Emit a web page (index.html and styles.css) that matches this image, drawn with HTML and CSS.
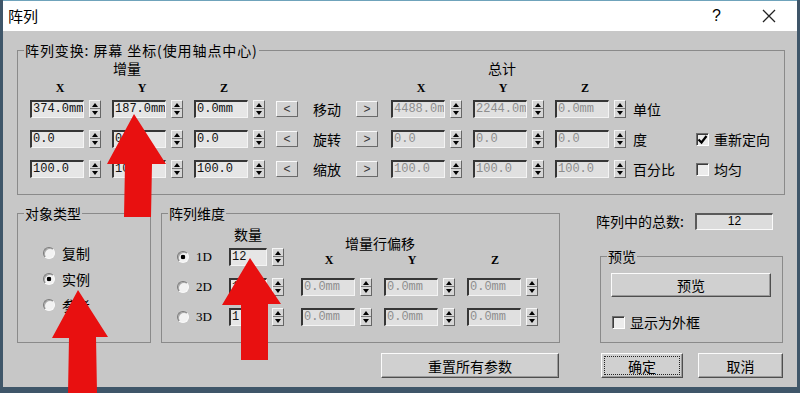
FILE: index.html
```html
<!DOCTYPE html>
<html lang="zh-CN">
<head>
  <meta charset="UTF-8">
  <title>阵列</title>
  <link rel="stylesheet" href="styles.css">
</head>
<body>
  <div class="dialog">
    <div class="titlebar">
      <span class="title">阵列</span>
      <span class="help">?</span>
      <svg class="close" width="14" height="14" viewBox="0 0 14 14"><path d="M1 1L13 13M13 1L1 13" stroke="#222" stroke-width="1.3"/></svg>
    </div>

    <div class="content">
      <fieldset class="group transform">
        <legend>阵列变换: 屏幕 坐标(使用轴点中心)</legend>
        <div class="transform-body">
          <div class="trow heads">
            <span class="head col-b">增量</span>
            <span class="head head-total col-ty">总计</span>
          </div>
          <div class="trow axes">
            <span class="axis col-a">X</span>
            <span class="axis col-b">Y</span>
            <span class="axis col-c">Z</span>
            <span class="axis col-tx">X</span>
            <span class="axis col-ty">Y</span>
            <span class="axis col-tz">Z</span>
          </div>
          <div class="trow">
            <div class="spin"><span class="field">374.0mm</span><span class="updown"></span></div>
            <div class="spin"><span class="field">187.0mm</span><span class="updown"></span></div>
            <div class="spin"><span class="field">0.0mm</span><span class="updown"></span></div>
            <button class="step">&lt;</button>
            <span class="label">移动</span>
            <button class="step">&gt;</button>
            <div class="spin off"><span class="field">4488.0mm</span><span class="updown"></span></div>
            <div class="spin off"><span class="field">2244.0mm</span><span class="updown"></span></div>
            <div class="spin off"><span class="field">0.0mm</span><span class="updown"></span></div>
            <span class="label unit">单位</span>
          </div>
          <div class="trow">
            <div class="spin"><span class="field">0.0</span><span class="updown"></span></div>
            <div class="spin"><span class="field">0.0</span><span class="updown"></span></div>
            <div class="spin"><span class="field">0.0</span><span class="updown"></span></div>
            <button class="step">&lt;</button>
            <span class="label">旋转</span>
            <button class="step">&gt;</button>
            <div class="spin off"><span class="field">0.0</span><span class="updown"></span></div>
            <div class="spin off"><span class="field">0.0</span><span class="updown"></span></div>
            <div class="spin off"><span class="field">0.0</span><span class="updown"></span></div>
            <span class="label unit">度</span>
            <label class="check"><span class="box on"><svg width="11" height="11" viewBox="0 0 11 11"><path d="M1.5 5.5L4.5 8.5L9.5 2" stroke="#000" stroke-width="2.2" fill="none"/></svg></span>重新定向</label>
          </div>
          <div class="trow">
            <div class="spin"><span class="field">100.0</span><span class="updown"></span></div>
            <div class="spin"><span class="field">100.0</span><span class="updown"></span></div>
            <div class="spin"><span class="field">100.0</span><span class="updown"></span></div>
            <button class="step">&lt;</button>
            <span class="label">缩放</span>
            <button class="step">&gt;</button>
            <div class="spin off"><span class="field">100.0</span><span class="updown"></span></div>
            <div class="spin off"><span class="field">100.0</span><span class="updown"></span></div>
            <div class="spin off"><span class="field">100.0</span><span class="updown"></span></div>
            <span class="label unit">百分比</span>
            <label class="check"><span class="box"></span>均匀</label>
          </div>
        </div>
      </fieldset>

      <div class="lower">
        <div class="lower-left">
          <fieldset class="group objtype">
            <legend>对象类型</legend>
            <div class="radios">
              <div class="opt"><span class="radio"></span>复制</div>
              <div class="opt"><span class="radio on"></span>实例</div>
              <div class="opt"><span class="radio"></span>参考</div>
            </div>
          </fieldset>

          <fieldset class="group dims">
            <legend>阵列维度</legend>
            <div class="dims-grid">
              <span></span>
              <span class="count-head">数量</span>
              <div class="offset-head">
                <div class="offset-title">增量行偏移</div>
                <div class="offset-axes">
                  <span class="axis small">X</span>
                  <span class="axis small">Y</span>
                  <span class="axis small">Z</span>
                </div>
              </div>

              <div class="opt"><span class="radio on"></span><span class="dim">1D</span></div>
              <div class="spin"><span class="field short">12</span><span class="updown"></span></div>

              <div class="opt"><span class="radio"></span><span class="dim">2D</span></div>
              <div class="spin"><span class="field short">1</span><span class="updown"></span></div>
              <div class="spin off"><span class="field">0.0mm</span><span class="updown"></span></div>
              <div class="spin off"><span class="field">0.0mm</span><span class="updown"></span></div>
              <div class="spin off"><span class="field">0.0mm</span><span class="updown"></span></div>

              <div class="opt"><span class="radio"></span><span class="dim">3D</span></div>
              <div class="spin"><span class="field short">1</span><span class="updown"></span></div>
              <div class="spin off"><span class="field">0.0mm</span><span class="updown"></span></div>
              <div class="spin off"><span class="field">0.0mm</span><span class="updown"></span></div>
              <div class="spin off"><span class="field">0.0mm</span><span class="updown"></span></div>
            </div>
          </fieldset>
        </div>

        <div class="lower-right">
          <div class="total-row">
            <span>阵列中的总数:</span>
            <span class="total">12</span>
          </div>
          <fieldset class="group preview">
            <legend>预览</legend>
            <button class="btn preview-btn">预览</button>
            <label class="check"><span class="box"></span>显示为外框</label>
          </fieldset>
        </div>

        <button class="btn reset">重置所有参数</button>

        <div class="actions">
          <button class="btn ok">确定</button>
          <button class="btn cancel">取消</button>
        </div>
      </div>
    </div>
  </div>

  <!-- flèches rouges d'annotation -->
  <svg class="marks" width="800" height="393" viewBox="0 0 800 393">
    <polygon points="134,114 166,164 152,164 151,217 124,217 125,164 107,164" fill="#e81010"/>
    <polygon points="78,290 108,337 96,337 97,393 68,393 69,338 52,338" fill="#e81010"/>
    <polygon points="250,258 281,304 268,304 268,360 241,360 241,305 222,305" fill="#e81010"/>
  </svg>
</body>
</html>
```

FILE: styles.css
```css
* {
  box-sizing: border-box;
}

body {
  margin: 0;
  width: 800px;
  height: 393px;
  overflow: hidden;
  position: relative;
  background: #3f5669;
  font-family: "Noto Sans CJK SC", "Noto Sans", sans-serif;
  font-size: 14px;
  line-height: 18px;
  color: #000;
}

.dialog {
  margin-left: 3px;
  width: 794px;
  height: 387px;
  background: #c7c7c7;
}

.titlebar {
  height: 31px;
  background: #fff;
  border-top: 1px solid #6fa3bb;
  display: flex;
  align-items: center;
  padding-left: 5px;
}

.title {
  flex: 1;
  font-size: 15px;
}

.help {
  font-family: "Liberation Sans", sans-serif;
  font-size: 16px;
  margin-right: 41px;
}

.close {
  margin-right: 21px;
}

.content {
  padding: 10px 0 0 14px;
}

fieldset {
  margin: 0;
  padding: 0;
  min-width: 0;
  border: 1px solid #8a8a8a;
}

legend {
  margin-left: 6px;
  padding: 0 1px;
  font-size: 14px;
  line-height: 18px;
}

/* bloc du haut */
.transform {
  width: 768px;
}

.transform legend {
  letter-spacing: 0.9px;
}

.transform-body {
  padding: 0 0 10px 12px;
}

.trow {
  display: grid;
  grid-template-columns: 71px 71px 71px 22px 36px 24px 71px 71px 71px 48px auto;
  column-gap: 11px;
  align-items: center;
  height: 30px;
}

.trow.heads {
  height: 18px;
}

.trow.axes {
  height: 17px;
  align-items: start;
}

.col-a { grid-column: 1; }
.col-b { grid-column: 2; }
.col-c { grid-column: 3; }
.col-tx { grid-column: 7; }
.col-ty { grid-column: 8; }
.col-tz { grid-column: 9; }

.head {
  margin-left: 1px;
  line-height: 16px;
}

.head-total {
  margin-left: 15px;
}

.axis {
  width: 60px;
  text-align: center;
  font-family: "Liberation Serif", serif;
  font-weight: bold;
  font-size: 12px;
  line-height: 16px;
  margin-top: 3px;
}

.axis.small {
  width: 56px;
  margin-top: 0;
}

.label {
  text-align: center;
}

.unit {
  text-align: left;
  margin-left: -4px;
}

/* champs + flèches */
.spin {
  display: flex;
  align-items: center;
  gap: 5px;
}

.field {
  display: block;
  width: 54px;
  height: 18px;
  padding-left: 1px;
  background: #e6e6e6;
  border-top: 2px solid #363636;
  border-left: 2px solid #363636;
  border-right: 1px solid #f4f4f4;
  border-bottom: 1px solid #f4f4f4;
  font-family: "Liberation Mono", monospace;
  font-size: 12px;
  line-height: 15px;
  white-space: nowrap;
  overflow: hidden;
  color: #111;
}

.field.short {
  width: 38px;
}

.spin.off .field {
  color: #8e8e8e;
  background: #e0e0e0;
}

.updown {
  display: block;
  position: relative;
  width: 12px;
  height: 18px;
  border: 1px solid;
  border-color: #f6f6f6 #666 #666 #f6f6f6;
  background: linear-gradient(#d6d6d6 0 7px, #7a7a7a 7px 8px, #d6d6d6 8px);
}

.updown::before,
.updown::after {
  content: "";
  position: absolute;
  left: 2px;
  border-left: 3px solid transparent;
  border-right: 3px solid transparent;
}

.updown::before {
  top: 2px;
  border-bottom: 4px solid #000;
}

.updown::after {
  bottom: 2px;
  border-top: 4px solid #000;
}

.step {
  width: 22px;
  height: 16px;
  padding: 0;
  background: #d2d2d2;
  border: 1px solid;
  border-color: #fafafa #6a6a6a #6a6a6a #fafafa;
  font-family: "Liberation Sans", sans-serif;
  font-size: 12px;
  line-height: 13px;
  color: #333;
}

/* cases à cocher et boutons radio */
.check {
  display: flex;
  align-items: center;
  gap: 5px;
}

.box {
  display: flex;
  align-items: center;
  justify-content: center;
  width: 13px;
  height: 13px;
  background: #ececec;
  border: 1px solid;
  border-color: #6e6e6e #fff #fff #6e6e6e;
  box-shadow: inset 1px 1px 0 #3c3c3c;
}

.opt {
  display: flex;
  align-items: center;
  gap: 7px;
  height: 26px;
}

.radio {
  display: block;
  width: 12px;
  height: 12px;
  border-radius: 50%;
  background: #f2f2f2;
  border: 1px solid;
  border-color: #7a7a7a #fafafa #fafafa #7a7a7a;
  box-shadow: inset 1px 1px 0 #a8a8a8;
}

.radio.on {
  background: radial-gradient(circle, #000 0 2px, #f2f2f2 2.6px);
}

.dim {
  font-family: "Liberation Serif", serif;
  font-size: 13px;
}

/* bas de la fenêtre */
.lower {
  display: grid;
  grid-template-columns: 543px 187px;
  column-gap: 36px;
  row-gap: 10px;
  margin-top: 9px;
}

.lower-left {
  display: flex;
  gap: 10px;
}

.objtype {
  width: 134px;
}

.radios {
  padding: 18px 0 0 25px;
}

.dims {
  width: 399px;
}

.dims-grid {
  display: grid;
  grid-template-columns: 40px 60px 71px 71px 71px;
  grid-template-rows: 20px 30px 30px 30px;
  column-gap: 12px;
  align-items: center;
  padding: 0 0 10px 15px;
}

.dims-grid .opt {
  height: auto;
}

.count-head {
  align-self: end;
  width: 38px;
  text-align: center;
  line-height: 16px;
}

.offset-head {
  grid-column: 3 / 6;
  grid-row: 1 / 3;
  align-self: start;
  padding-top: 13px;
}

.offset-title {
  padding-left: 44px;
  line-height: 16px;
}

.offset-axes {
  display: flex;
  gap: 27px;
  margin-top: 1px;
}

.lower-right {
  display: flex;
  flex-direction: column;
  padding-top: 8px;
}

.total-row {
  display: flex;
  align-items: center;
  height: 18px;
}

.total {
  margin: 0 10px 0 auto;
  width: 78px;
  height: 17px;
  background: #dcdcdc;
  border: 1px solid;
  border-color: #5a5a5a #fafafa #fafafa #5a5a5a;
  border-width: 2px 1px 1px 2px;
  text-align: center;
  font-family: "Liberation Sans", sans-serif;
  font-size: 12px;
  line-height: 13px;
}

.preview {
  flex: 1;
  width: 183px;
  margin: 17px 0 0 4px;
}

.btn {
  height: 25px;
  padding: 0;
  background: #d0d0d0;
  border: 1px solid;
  border-color: #fbfbfb #4e4e4e #4e4e4e #fbfbfb;
  box-shadow: inset -1px -1px 0 #9a9a9a;
  font-family: inherit;
  font-size: 14px;
  color: #000;
}

.preview-btn {
  width: 160px;
  height: 24px;
  margin: 8px 0 0 10px;
}

.preview .check {
  margin: 16px 0 0 11px;
}

.reset {
  justify-self: end;
  width: 178px;
  margin-right: 1px;
}

.actions {
  display: flex;
  gap: 15px;
  padding-left: 5px;
}

.ok {
  width: 82px;
  outline: 1px dotted #222;
  outline-offset: -4px;
}

.cancel {
  width: 85px;
}

.marks {
  position: absolute;
  top: 0;
  left: 0;
  pointer-events: none;
}
```
